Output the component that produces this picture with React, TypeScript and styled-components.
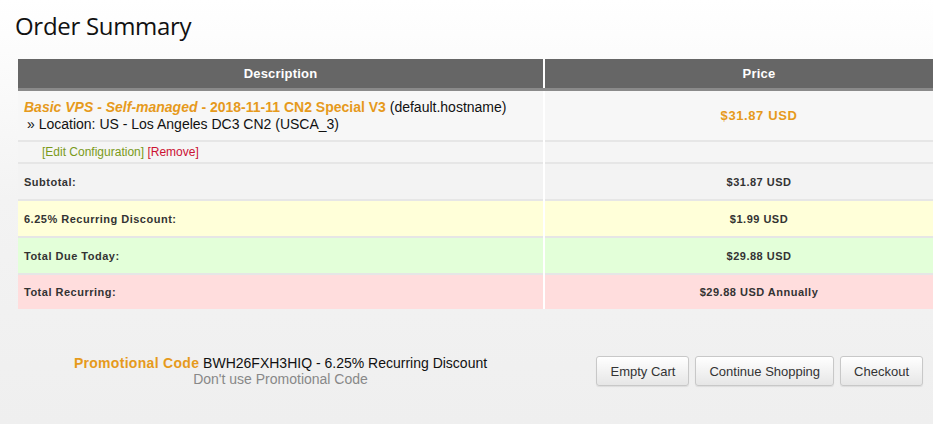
import { createGlobalStyle, styled } from 'styled-components'

const GlobalStyle = createGlobalStyle`
  html, body {
    margin: 0;
    padding: 0;
    overflow: hidden;
  }
  body {
    width: 933px;
    height: 424px;
    background: linear-gradient(to bottom, #ffffff 0px, #f3f3f3 200px, #efefef 424px);
    font-family: "Liberation Sans", Arial, sans-serif;
    color: #333;
  }
`

const Page = styled.div`
  width: 933px;
  height: 424px;
  padding: 8px 0 0 0;
  box-sizing: border-box;
`

const Title = styled.h1`
  margin: 0 0 15px 15px;
  font-family: "Open Sans", "Noto Sans", sans-serif;
  font-weight: 400;
  font-size: 24px;
  line-height: 36px;
  color: #111;
  letter-spacing: -0.3px;
`

const Cart = styled.table`
  margin-left: 18px;
  width: 957px;
  border-collapse: collapse;
  table-layout: fixed;
  font-size: 12px;
`

const HeadCell = styled.th<{ $w?: number }>`
  width: ${({ $w }) => ($w ? `${$w}px` : 'auto')};
  height: 29px;
  padding: 0;
  background: #666666;
  border-bottom: 3px solid #8a8a8a;
  border-right: 2px solid #ffffff;
  color: #fff;
  font-size: 13px;
  font-weight: bold;
  text-align: center;
  letter-spacing: 0.2px;
`

const Row = styled.tr<{ $bg: string }>`
  background: ${({ $bg }) => $bg};
  & > td {
    border-top: 2px solid #e6e6e6;
  }
`

const Cell = styled.td<{ $center?: boolean; $h: number }>`
  height: ${({ $h }) => $h}px;
  padding: 0 6px;
  text-align: ${({ $center }) => ($center ? 'center' : 'left')};
  vertical-align: middle;
  border-right: 2px solid #ffffff;
`

const ProductName = styled.div`
  font-size: 14px;
  color: #111;
  line-height: 17px;
`

const Brand = styled.span`
  color: #e69a1c;
  font-weight: bold;
`

const Location = styled.div`
  font-size: 14px;
  color: #111;
  line-height: 17px;
  padding-left: 3px;
`

const Price = styled.span`
  color: #e69a1c;
  font-weight: bold;
  font-size: 13px;
  letter-spacing: 0.6px;
`

const EditLinks = styled.div`
  padding-left: 18px;
`

const LinkText = styled.span<{ $c: string }>`
  color: ${({ $c }) => $c};
  font-size: 12px;
`

const Label = styled.span`
  font-weight: bold;
  font-size: 11px;
  color: #333;
  letter-spacing: 0.5px;
`

const Footer = styled.div`
  display: flex;
  align-items: center;
  margin-top: 46px;
`

const Promo = styled.div`
  width: 525px;
  margin-left: 18px;
  text-align: center;
  font-size: 14px;
  line-height: 16px;
  color: #111;
`

const PromoLabel = styled.span`
  color: #e69a1c;
  font-weight: bold;
  letter-spacing: 0.3px;
`

const Muted = styled.div`
  color: #888;
`

const Buttons = styled.div`
  display: flex;
  gap: 6px;
  margin-left: auto;
  margin-right: 10px;
`

const Button = styled.button`
  height: 30px;
  padding: 0 13px;
  font-family: "Liberation Sans", Arial, sans-serif;
  font-size: 13px;
  color: #333;
  background: linear-gradient(to bottom, #ffffff, #e6e6e6);
  border: 1px solid #c8c8c8;
  border-radius: 3px;
  box-shadow: 0 1px 1px rgba(0, 0, 0, 0.08);
`

export default function App() {
  return (
    <Page>
      <GlobalStyle />
      <Title>Order Summary</Title>
      <Cart>
        <thead>
          <tr>
            <HeadCell $w={525}>Description</HeadCell>
            <HeadCell>Price</HeadCell>
          </tr>
        </thead>
        <tbody>
          <Row $bg="#f7f7f7">
            <Cell $h={49}>
              <ProductName>
                <Brand>
                  <i>Basic VPS - Self-managed</i> - 2018-11-11 CN2 Special V3
                </Brand>{' '}
                (default.hostname)
              </ProductName>
              <Location>» Location: US - Los Angeles DC3 CN2 (USCA_3)</Location>
            </Cell>
            <Cell $center $h={49}>
              <Price>$31.87 USD</Price>
            </Cell>
          </Row>
          <Row $bg="#f5f5f5">
            <Cell $h={20}>
              <EditLinks>
                <LinkText $c="#7a9a1a">[Edit Configuration]</LinkText>{' '}
                <LinkText $c="#cc1133">[Remove]</LinkText>
              </EditLinks>
            </Cell>
            <Cell $h={20} />
          </Row>
          <Row $bg="#f3f3f3">
            <Cell $h={35}>
              <Label>Subtotal:</Label>
            </Cell>
            <Cell $center $h={35}>
              <Label>$31.87 USD</Label>
            </Cell>
          </Row>
          <Row $bg="#ffffd9">
            <Cell $h={35}>
              <Label>6.25% Recurring Discount:</Label>
            </Cell>
            <Cell $center $h={35}>
              <Label>$1.99 USD</Label>
            </Cell>
          </Row>
          <Row $bg="#e3ffd9">
            <Cell $h={35}>
              <Label>Total Due Today:</Label>
            </Cell>
            <Cell $center $h={35}>
              <Label>$29.88 USD</Label>
            </Cell>
          </Row>
          <Row $bg="#ffdddd">
            <Cell $h={34}>
              <Label>Total Recurring:</Label>
            </Cell>
            <Cell $center $h={34}>
              <Label>$29.88 USD Annually</Label>
            </Cell>
          </Row>
        </tbody>
      </Cart>
      <Footer>
        <Promo>
          <div>
            <PromoLabel>Promotional Code</PromoLabel> BWH26FXH3HIQ - 6.25% Recurring Discount
          </div>
          <Muted>Don't use Promotional Code</Muted>
        </Promo>
        <Buttons>
          <Button>Empty Cart</Button>
          <Button>Continue Shopping</Button>
          <Button>Checkout</Button>
        </Buttons>
      </Footer>
    </Page>
  )
}
